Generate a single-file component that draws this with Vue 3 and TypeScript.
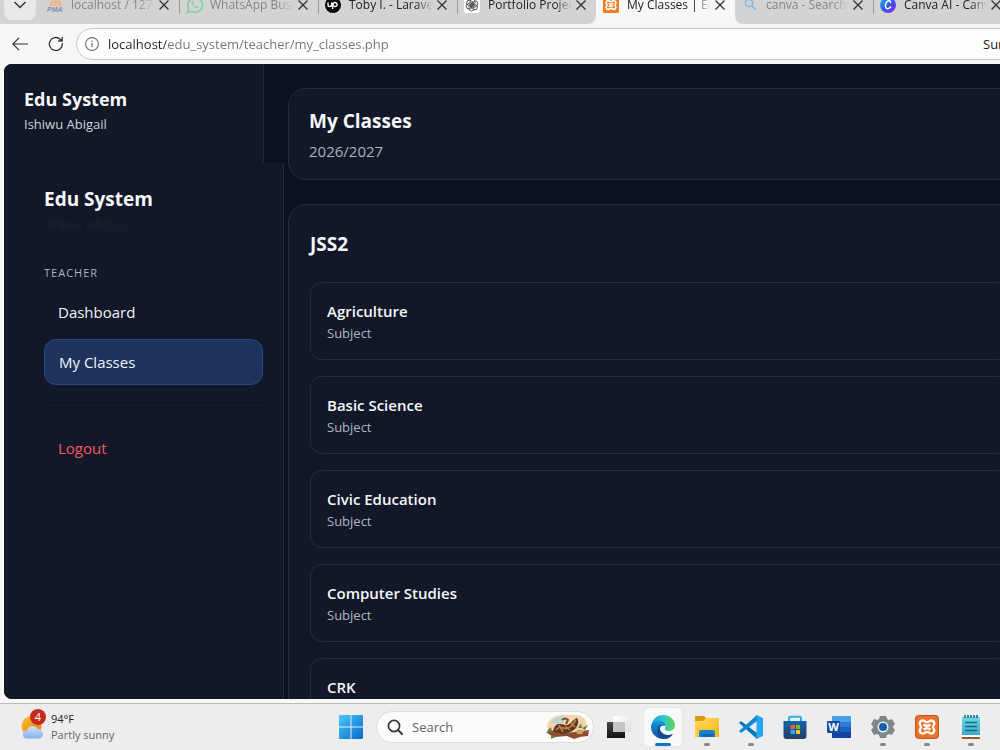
<script setup lang="ts">
import { ref } from 'vue'

interface Tab {
  icon: string
  title: string
  tone: 'loaded' | 'asleep'
}

const leftTabs: Tab[] = [
  { icon: 'pma', title: 'localhost / 127.0', tone: 'asleep' },
  { icon: 'whatsapp', title: 'WhatsApp Busin', tone: 'asleep' },
  { icon: 'upwork', title: 'Toby I. - Laravel', tone: 'loaded' },
  { icon: 'gpt', title: 'Portfolio Project', tone: 'loaded' },
]
const activeTabs: Tab[] = [{ icon: 'xampp', title: 'My Classes | Edu', tone: 'loaded' }]
const rightTabs: Tab[] = [
  { icon: 'search', title: 'canva - Search', tone: 'asleep' },
  { icon: 'canva', title: 'Canva AI - Canva', tone: 'loaded' },
]
const tabGroups = [
  { name: 'before', tabs: leftTabs },
  { name: 'active', tabs: activeTabs },
  { name: 'after', tabs: rightTabs },
]

const address = ref('localhost/edu_system/teacher/my_classes.php')
const query = ref('')
const teacher = 'Ishiwu Abigail'
const subjects = ['Agriculture', 'Basic Science', 'Civic Education', 'Computer Studies', 'CRK']

const apps = [
  { id: 'edge', label: 'Microsoft Edge', state: 'focused' },
  { id: 'files', label: 'File Explorer', state: 'open' },
  { id: 'code', label: 'Visual Studio Code', state: 'open' },
  { id: 'store', label: 'Microsoft Store', state: '' },
  { id: 'word', label: 'Word', state: '' },
  { id: 'settings', label: 'Settings', state: 'open' },
  { id: 'xampp', label: 'XAMPP', state: 'open' },
  { id: 'notepad', label: 'Notepad', state: 'open' },
]
</script>

<template>
  <div class="desktop">
    <header class="browser">
      <div class="tabstrip">
        <div class="tab-menu-wrap">
          <button class="tab-menu" aria-label="Tab actions">
            <svg width="14" height="8" viewBox="0 0 14 8"><path d="M1.5 1 7 6.5 12.500 1" fill="none" stroke="#333" stroke-width="1.4" /></svg>
          </button>
        </div>
        <div v-for="group in tabGroups" :key="group.name" class="tab-group" :class="group.name">
          <div v-for="tab in group.tabs" :key="tab.title" class="tab" :class="tab.tone">
            <span class="favicon">
              <svg v-if="tab.icon === 'pma'" width="16" height="16" viewBox="0 0 16 16">
                <path d="M2 9 6 1v8ZM7 9V0q4 3 3 9ZM11 9q1-4-1-7 4 2 5 7Z" fill="#eeb57c" />
                <text x="0" y="15" class="pma-text">PMA</text>
              </svg>
              <svg v-else-if="tab.icon === 'whatsapp'" width="18" height="18" viewBox="0 0 18 18">
                <path d="m1.500 16.500 1.200-4.200A7.300 7.300 0 1 1 5.600 15.300Z" fill="none" stroke="#7fd0a3" stroke-width="1.700" />
                <path d="M6 4.800c-1.600 1.700.1 4.200 1.700 5.700 1.800 1.600 3.800 2.300 4.900.6l-1.900-1.300-1 1C8.300 10.300 7.500 9.500 7 8.300l.8-1-.8-2Z" fill="#7fd0a3" />
              </svg>
              <svg v-else-if="tab.icon === 'upwork'" width="16" height="16" viewBox="0 0 16 16">
                <circle cx="8" cy="8" r="8" fill="#050505" />
                <path d="M3 5.500v2.300a1.800 1.800 0 0 0 3.600 0V5.500q1.300 3.500 3.300 4a2 2 0 1 0-1.800-2L7.500 12" fill="none" stroke="#fff" stroke-width="1.400" />
              </svg>
              <svg v-else-if="tab.icon === 'gpt'" width="16" height="16" viewBox="0 0 16 16">
                <rect width="16" height="16" rx="3" fill="#fff" />
                <g fill="none" stroke="#555" stroke-width=".9">
                  <rect v-for="turn in 6" :key="turn" x="6" y="2" width="5" height="7" rx="2.500" :transform="'rotate(' + turn * 60 + ' 8 8)'" />
                </g>
              </svg>
              <svg v-else-if="tab.icon === 'xampp'" width="16" height="16" viewBox="0 0 24 24">
                <rect width="24" height="24" rx="2" fill="#f47a20" />
                <path d="M8 5.500a3 3 0 0 0-2.500 5q1 1.500 0 3a3 3 0 1 0 4.500 4q2-1 4 0a3 3 0 1 0 4.500-4q-1-1.500 0-3a3 3 0 1 0-4.500-4q-2 1-4 0A3 3 0 0 0 8 5.500ZM8.500 9.500q3.500 2.500 7 0M8.500 14.500q3.500-2.500 7 0" fill="none" stroke="#fff" stroke-width="2.500" />
              </svg>
              <svg v-else-if="tab.icon === 'search'" width="16" height="16" viewBox="0 0 16 16">
                <circle cx="7" cy="6" r="3.600" fill="none" stroke="#86b9e8" stroke-width="1.600" />
                <path d="m9.700 8.700 4 4" stroke="#86b9e8" stroke-width="1.800" />
              </svg>
              <svg v-else width="16" height="16" viewBox="0 0 16 16">
                <defs>
                  <linearGradient id="canva" x1="0" y1="0" x2="1" y2="1"><stop offset="0" stop-color="#14c5df" /><stop offset=".5" stop-color="#3657ef" /><stop offset="1" stop-color="#8d22ea" /></linearGradient>
                </defs>
                <circle cx="8" cy="8" r="8" fill="url(#canva)" />
                <path d="M10.500 5.600c.3-3-3.700-2.300-4.800 1.500-1 4 1.500 6.200 5 2.900" fill="none" stroke="#fff" stroke-width="1.500" stroke-linecap="round" />
              </svg>
            </span>
            <span class="tab-title">{{ tab.title }}</span>
            <button class="tab-close" :aria-label="'Close ' + tab.title">
              <svg width="10" height="10" viewBox="0 0 10 10"><path d="m.5.5 9 9m0-9-9 9" stroke="#333" stroke-width="1.300" /></svg>
            </button>
          </div>
        </div>
      </div>

      <div class="toolbar">
        <button class="tool" aria-label="Back">
          <svg width="16" height="14" viewBox="0 0 16 14"><path d="M16 7H1M7 .8.900 7 7 13.200" fill="none" stroke="#333" stroke-width="1.200" /></svg>
        </button>
        <button class="tool" aria-label="Refresh">
          <svg width="16" height="16" viewBox="0 0 16 16"><path d="M14.300 7.200A6.500 6.500 0 1 1 12.200 3.200L14 4.800M14.200 1v4h-4" fill="none" stroke="#333" stroke-width="1.300" /></svg>
        </button>
        <div class="omnibox">
          <button class="site-info" aria-label="Site information">
            <svg width="14" height="14" viewBox="0 0 14 14"><circle cx="7" cy="7" r="6.400" fill="none" stroke="#707070" stroke-width="1.100" /><path d="M7 6v4.200M7 3.600v1.300" stroke="#707070" stroke-width="1.200" /></svg>
          </button>
          <input v-model="address" class="address" aria-label="Address" spellcheck="false" />
          <span class="notice">Sum</span>
        </div>
      </div>
    </header>

    <div class="viewport">
      <aside class="sidebar">
        <div class="brand">
          <h2>Edu System</h2>
          <p>{{ teacher }}</p>
        </div>
        <div class="panel">
          <h2>Edu System</h2>
          <p class="ghost">{{ teacher }}</p>
          <h3>TEACHER</h3>
          <nav>
            <a href="#dashboard">Dashboard</a>
            <a href="#classes" class="current" aria-current="page">My Classes</a>
            <hr />
            <a href="#logout" class="logout">Logout</a>
          </nav>
        </div>
      </aside>
      <main>
        <section class="card heading">
          <h1>My Classes</h1>
          <p>2026/2027</p>
        </section>
        <section class="card classes">
          <h2>JSS2</h2>
          <ul>
            <li v-for="subject in subjects" :key="subject">
              <strong>{{ subject }}</strong>
              <span>Subject</span>
            </li>
          </ul>
        </section>
      </main>
    </div>

    <footer class="taskbar">
      <div class="weather-zone">
        <button class="weather">
          <span class="weather-icon">
            <svg width="24" height="24" viewBox="0 0 24 24">
              <defs>
                <linearGradient id="sun" x1="0" y1="0" x2="1" y2="1"><stop offset="0" stop-color="#f8be2c" /><stop offset="1" stop-color="#ed7818" /></linearGradient>
                <linearGradient id="cloud" x1="0" y1="0" x2="0" y2="1"><stop offset="0" stop-color="#d3e4fb" /><stop offset="1" stop-color="#86adec" /></linearGradient>
              </defs>
              <circle cx="10.500" cy="11" r="10" fill="url(#sun)" />
              <path d="M6 23.500a4 4 0 0 1-.2-8 6 6 0 0 1 11-1.200 4.700 4.700 0 0 1 1.700 9.200Z" fill="url(#cloud)" />
            </svg>
            <b>4</b>
          </span>
          <span class="forecast"><span>94°F</span><small>Partly sunny</small></span>
        </button>
      </div>
      <button class="app" aria-label="Start">
        <svg width="24" height="24" viewBox="0 0 24 24">
          <defs><linearGradient id="win" x1="0" y1="0" x2="1" y2="1"><stop offset="0" stop-color="#4cc8fb" /><stop offset="1" stop-color="#0469cc" /></linearGradient></defs>
          <path d="M1 0h10.500v11.500H0V1q0-1 1-1ZM12.500 0H23q1 0 1 1v10.500H12.500ZM0 12.500h11.500V24H1q-1 0-1-1ZM12.500 12.500H24V23q0 1-1 1H12.500Z" fill="url(#win)" />
        </svg>
      </button>
      <label class="search">
        <svg width="16" height="16" viewBox="0 0 16 16"><circle cx="7" cy="7" r="5.600" fill="none" stroke="#333" stroke-width="1.700" /><path d="m11 11 4 4" stroke="#333" stroke-width="2" stroke-linecap="round" /></svg>
        <input v-model="query" type="text" placeholder="Search" aria-label="Search" />
        <svg width="46" height="26" viewBox="0 0 46 26">
          <path d="M2 13C3 3 14 0 24 1c9-1 17 2 18 9l-3 8H5Z" fill="#f3d4ab" />
          <path d="M6 9Q9 2 17 2l5 3-6 5Z" fill="#b9d7d0" />
          <path d="M1 18q8-3 17 1l12-1 14-2-1 6-8 1-6 2-7-3-12 1-5-2Z" fill="#8b4e2c" />
          <path d="M8 17c2-8 6-8 12-6 5 1 7-5 12-7 3 4 0 11-5 13-6 4-14 3-19 0Z" fill="#5b3826" />
          <path d="M11 16c5-7 9 2 14-3 4-3 4-5 6-7M14 11l4 7M20 12l5 4M26 9l4 4" fill="none" stroke="#c18441" stroke-width="1.600" />
          <path d="M17 6q3-3 6 0l-2 4" fill="none" stroke="#76513a" stroke-width="2" />
          <path d="M31 17q3-3 8 0l-2 3h-5Z" fill="#d4a05d" />
          <path d="m2 17 4-4 1 5Zm31-3 3-5 1 5Zm4 0 6-3-3 5ZM6 21l5 2-5 2Z" fill="#5f8546" />
        </svg>
      </label>
      <button class="app task-view" aria-label="Task view">
        <svg width="24" height="24" viewBox="0 0 24 24">
          <defs>
            <linearGradient id="task" x1="0" y1="0" x2="0" y2="1"><stop offset="0" stop-color="#484848" /><stop offset="1" stop-color="#111" /></linearGradient>
            <linearGradient id="glass" x1="0" y1="0" x2="1" y2="1"><stop offset="0" stop-color="#fff" /><stop offset="1" stop-color="#dedede" /></linearGradient>
          </defs>
          <path d="M0 7h18v16H0Z" fill="url(#task)" /><path d="M6 1h18v16H6Z" fill="url(#glass)" /><path d="M6 7h12v10H6Z" fill="#c4c4c4" />
        </svg>
      </button>
      <button v-for="app in apps" :key="app.id" class="app" :class="app.state" :aria-label="app.label">
        <svg v-if="app.id === 'edge'" width="24" height="24" viewBox="0 0 24 24">
          <defs>
            <linearGradient id="edge-top" x1="0" y1="0" x2="1" y2="0"><stop offset="0" stop-color="#139bdd" /><stop offset=".5" stop-color="#2cc5d5" /><stop offset="1" stop-color="#67d64b" /></linearGradient>
            <linearGradient id="edge-left" x1="0" y1="0" x2="0" y2="1"><stop offset="0" stop-color="#1695df" /><stop offset="1" stop-color="#0754a4" /></linearGradient>
          </defs>
          <path d="M0 12C1 4 6 0 12 0c7 0 12 5 12 10 0 4-3 6-6 6-3 0-5-1-4-3 2-4-1-6-5-6-5 0-9 4-9 8Z" fill="url(#edge-top)" />
          <path d="M0 12c0-3 3-6 8-6 4 0 7 2 6.500 5-5-1-8 2-5 7 2 3 7 4 12 1-2 3-5 5-9 5C5 24 0 18 0 12Z" fill="url(#edge-left)" />
          <path d="M9 10c-5 3-3 12 4 14 4 0 7-2 9-5-5 2-9 1-11.500-2C8 14 9 11 11 10Z" fill="#104b8b" />
        </svg>
        <svg v-else-if="app.id === 'files'" width="24" height="24" viewBox="0 0 24 24">
          <defs><linearGradient id="folder" x1="0" y1="0" x2="1" y2="1"><stop offset="0" stop-color="#ffd85b" /><stop offset="1" stop-color="#f8b916" /></linearGradient></defs>
          <path d="M0 2q0-1 1-1h8l2 2v5H0Z" fill="#d99b0c" /><path d="M0 6h8l3-3h12q1 0 1 1v18H0Z" fill="url(#folder)" />
          <path d="M4 22v-5q0-2 2-2h12q2 0 2 2v5Z" fill="#1683cf" /><path d="M6 22v-3h12v3Z" fill="#0b6bb1" />
        </svg>
        <svg v-else-if="app.id === 'code'" width="24" height="24" viewBox="0 0 24 24">
          <path d="m0 8 2-2 16 12v6L0 8Z" fill="#0779bd" /><path d="m0 16 2 2L18 6V0L0 16Z" fill="#1289ce" /><path d="M17.500 0 24 3v18l-6.500 3Z" fill="#25a7ef" />
        </svg>
        <svg v-else-if="app.id === 'store'" width="24" height="24" viewBox="0 0 24 24">
          <defs><linearGradient id="store" x1="0" y1="0" x2="0" y2="1"><stop offset="0" stop-color="#0d68aa" /><stop offset="1" stop-color="#253b64" /></linearGradient></defs>
          <path d="M6 7V3q0-1.200 1.200-1.200h9.600Q18 1.800 18 3v4" fill="none" stroke="#28b3e8" stroke-width="2" />
          <path d="M.5 6h23v15q0 3-3 3h-17q-3 0-3-3Z" fill="url(#store)" />
          <path d="M7.500 10H12v4H7.500Z" fill="#f05a38" /><path d="M13 10h4v4h-4Z" fill="#7fba35" /><path d="M7.500 15H12v4H7.500Z" fill="#26aaf0" /><path d="M13 15h4v4h-4Z" fill="#ffc52c" />
        </svg>
        <svg v-else-if="app.id === 'word'" width="24" height="24" viewBox="0 0 24 24">
          <path d="M5 1h19v6H5Z" fill="#459fea" /><path d="M5 7h19v5H5Z" fill="#2d7bd5" /><path d="M5 12h19v5H5Z" fill="#195fc0" /><path d="M5 17h19v6H5Z" fill="#10449d" />
          <rect x="0" y="6" width="13" height="12" rx="1" fill="#174ba5" /><text x="6.500" y="16" text-anchor="middle" class="word-letter">W</text>
        </svg>
        <svg v-else-if="app.id === 'settings'" width="24" height="24" viewBox="0 0 24 24">
          <path d="M9 1h6l1 3 2 1 3-1 3 5-2 2.500v1L24 15l-3 5-3-1-2 1-1 3H9l-1-3-2-1-3 1-3-5 2-2.500v-1L0 9l3-5 3 1 2-1Z" fill="#7e868e" />
          <circle cx="12" cy="12" r="5.500" fill="#eef2f5" /><circle cx="12" cy="12" r="4" fill="#1260aa" />
        </svg>
        <svg v-else-if="app.id === 'xampp'" width="24" height="24" viewBox="0 0 24 24">
          <rect x=".5" y=".5" width="23" height="23" rx="3" fill="#ec7028" stroke="#b95823" />
          <path d="M8 5.500a3 3 0 0 0-2.500 5q1 1.500 0 3a3 3 0 1 0 4.500 4q2-1 4 0a3 3 0 1 0 4.500-4q-1-1.500 0-3a3 3 0 1 0-4.500-4q-2 1-4 0A3 3 0 0 0 8 5.500ZM8.500 9.500q3.500 2.500 7 0M8.500 14.500q3.500-2.500 7 0" fill="none" stroke="#fff" stroke-width="2.400" />
        </svg>
        <svg v-else width="24" height="24" viewBox="0 0 24 24">
          <defs><linearGradient id="note" x1="0" y1="0" x2="0" y2="1"><stop offset="0" stop-color="#72d6e7" /><stop offset="1" stop-color="#36a9c6" /></linearGradient></defs>
          <path d="M3 2h18v19H3Z" fill="url(#note)" /><path d="M3 21h18v2q0 1-1 1H3Z" fill="#9b571e" /><path d="M3 20h18v2H3Z" fill="#fff" />
          <path d="M6 0v3m3-3v3m3-3v3m3-3v3m3-3v3M6 7.500h12M6 11.500h12M6 15.500h12" stroke="#176b83" stroke-width="1.600" />
        </svg>
      </button>
    </footer>
  </div>
</template>

<style>
body {
  margin: 0;
}
</style>

<style scoped>
.desktop {
  display: flex;
  flex-direction: column;
  height: 100vh;
  overflow: hidden;
  background: #f7f7f7;
  color: #222;
  font: 13px/20px "Open Sans", "Noto Sans", sans-serif;
}
* {
  box-sizing: border-box;
}
button {
  padding: 0;
  border: 0;
  background: none;
  color: inherit;
  font: inherit;
}
h1, h2, h3, p, ul {
  margin: 0;
  padding: 0;
}
svg {
  display: block;
  flex: none;
}
.browser {
  flex: none;
}
.tabstrip {
  display: flex;
  align-items: flex-end;
  height: 24px;
  overflow: hidden;
}
.tab-menu-wrap {
  display: flex;
  flex: none;
  align-items: flex-end;
  width: 40px;
  height: 24px;
  padding: 0 4px 4px;
  background: #d3d3d3;
}
.tab-menu {
  display: flex;
  align-items: center;
  justify-content: center;
  width: 32px;
  height: 30px;
  flex: none;
  border-radius: 8px;
  background: #e8e8e8;
}
.tab-group {
  display: flex;
  flex: none;
  height: 38px;
  background: #d3d3d3;
}
.before {
  border-radius: 0 0 8px 0;
}
.active {
  background: #f7f7f7;
}
.after {
  flex: 1 0 auto;
  border-radius: 0 0 0 8px;
}
.tab {
  position: relative;
  display: flex;
  align-items: center;
  width: 139px;
  padding: 0 10px 0 7px;
}
.after .tab {
  width: 138px;
}
.before .tab + .tab::before,
.after .tab + .tab::before {
  content: "";
  position: absolute;
  left: 0;
  top: 8px;
  width: 1px;
  height: 20px;
  background: #999;
}
.favicon {
  flex: none;
  width: 16px;
  margin-right: 8px;
}
.tab-title {
  flex: 1;
  overflow: hidden;
  white-space: nowrap;
  font-size: 12px;
  mask-image: linear-gradient(to right, #000 80%, transparent);
}
.asleep .tab-title {
  color: #858585;
}
.tab-close {
  flex: none;
  padding: 0 0 0 4px;
}
.pma-text {
  font: italic bold 7px "Liberation Sans", sans-serif;
  fill: #8589ad;
}
.toolbar {
  display: flex;
  align-items: center;
  height: 40px;
  padding-left: 2px;
  overflow: hidden;
}
.tool {
  display: flex;
  align-items: center;
  justify-content: center;
  width: 36px;
  height: 32px;
  flex: none;
}
.omnibox {
  display: flex;
  flex: 1;
  align-items: center;
  height: 32px;
  margin: 0 -60px 0 2px;
  padding: 0 0 0 8px;
  border: 1px solid #c8c8c8;
  border-radius: 16px;
  background: #fdfdfd;
}
.address {
  flex: 1;
  min-width: 0;
  height: 24px;
  margin-left: 9px;
  padding: 0;
  border: 0;
  outline: 0;
  background: linear-gradient(to right, #222 58px, #747474 58px);
  background-clip: text;
  color: transparent;
  font: inherit;
}
.notice {
  width: 76px;
}
.viewport {
  display: flex;
  flex: 1;
  min-height: 0;
  margin: 0 0 4px 4px;
  overflow: hidden;
  border-radius: 8px 0 0 8px;
  background: #0b111e;
  color: #f5f7fa;
}
.sidebar {
  flex: none;
  width: 260px;
}
.brand {
  height: 99px;
  padding: 23px 20px 0;
  border-right: 1px solid #252b39;
  background: #121827;
}
.brand h2,
.panel h2 {
  font-size: 18px;
  line-height: 24px;
}
.brand p {
  margin-top: 3px;
  color: #cdd3dc;
}
.panel {
  width: 280px;
  height: 100%;
  padding: 24px 20px 0 40px;
  border-right: 1px solid #252b39;
  background: #121827;
}
.panel h2 {
  font-size: 19px;
}
.ghost {
  margin-top: 3px;
  color: #1b202c;
}
.panel h3 {
  margin-top: 29px;
  color: #a9b5c6;
  font-size: 11px;
  font-weight: 400;
  line-height: 20px;
  letter-spacing: 1px;
}
nav {
  display: flex;
  flex-direction: column;
  margin-top: 7px;
  font-size: 15px;
  line-height: 24px;
}
nav a {
  padding: 10px 14px;
  color: #f1f4f8;
  text-decoration: none;
}
nav .current {
  margin-top: 5px;
  border: 1px solid #244989;
  border-radius: 12px;
  background: #1d335b;
}
nav hr {
  width: 100%;
  margin: 20px 0;
  border: 0;
  border-top: 1px solid #191f2d;
}
nav .logout {
  color: #f15a60;
}
main {
  flex: 1;
  min-width: 0;
  margin-right: -32px;
  padding: 24px 0 0 24px;
}
.card {
  border: 1px solid #262c3a;
  border-radius: 18px;
  background: #121827;
}
.heading {
  height: 92px;
  padding: 18px 20px;
}
.heading h1,
.classes h2 {
  font-size: 19px;
  line-height: 28px;
}
.heading p {
  margin-top: 6px;
  color: #a9b2bf;
  font-size: 15px;
}
.classes {
  margin-top: 24px;
  padding: 25px 21px;
}
.classes ul {
  display: grid;
  gap: 16px;
  margin-top: 24px;
  list-style: none;
}
.classes li {
  display: flex;
  flex-direction: column;
  padding: 16px;
  border: 1px solid #262c3a;
  border-radius: 12px;
}
.classes strong {
  font-size: 15px;
  font-weight: 600;
  line-height: 24px;
}
.classes li span {
  color: #adb6c3;
}
.taskbar {
  display: flex;
  flex: none;
  align-items: center;
  height: 47px;
  border-top: 1px solid #bbb;
  background: #ededed;
}
.weather-zone {
  flex: none;
  width: 332px;
  padding-left: 21px;
}
.weather {
  display: flex;
  align-items: center;
  text-align: left;
}
.weather-icon {
  position: relative;
  width: 24px;
  margin-right: 6px;
}
.weather-icon b {
  position: absolute;
  top: -6px;
  left: 9px;
  width: 16px;
  height: 16px;
  border-radius: 50%;
  background: #c42b1c;
  color: #fff;
  font-size: 11px;
  font-weight: 400;
  line-height: 16px;
  text-align: center;
}
.forecast {
  display: grid;
  font-size: 11px;
  line-height: 16px;
}
.forecast small {
  color: #666;
  font-size: inherit;
}
.app {
  position: relative;
  display: flex;
  flex: none;
  align-items: center;
  justify-content: center;
  width: 38px;
  height: 38px;
  margin-right: 6px;
  border-radius: 4px;
}
.focused {
  background: #f9f9f9;
  box-shadow: 0 0 0 1px #e4e4e4;
}
.open::after,
.focused::after {
  content: "";
  position: absolute;
  bottom: 0;
  width: 6px;
  height: 3px;
  border-radius: 2px;
  background: #888;
}
.focused::after {
  width: 16px;
  background: #0b78d0;
}
.search {
  display: flex;
  flex: none;
  align-items: center;
  width: 218px;
  height: 32px;
  margin-right: 6px;
  padding: 0 2px 0 10px;
  border: 1px solid #dcdcdc;
  border-radius: 16px;
  background: #fbfbfb;
}
.search input {
  flex: 1;
  min-width: 0;
  margin-left: 9px;
  padding: 0;
  border: 0;
  outline: 0;
  background: none;
  font: inherit;
}
.search input::placeholder {
  color: #666;
  opacity: 1;
}
.word-letter {
  font: bold 11px "Open Sans", sans-serif;
  fill: #fff;
}
</style>
